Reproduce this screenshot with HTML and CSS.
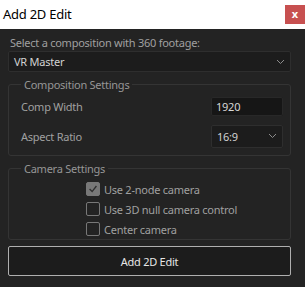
FILE: index.html
```html
<!DOCTYPE html>
<html>
  <head>
    <meta charset="UTF-8">
    <title>Add 2D Edit</title>
    <link rel="stylesheet" href="styles.css">
  </head>
  <body>
    <div class="titlebar">
      <span class="title">Add 2D Edit</span>
      <button type="button" class="close">x</button>
    </div>
    <div class="panel">
      <label class="intro">Select a composition with 360 footage:</label>
      <div class="dropdown wide">
        <span>VR Master</span>
        <svg width="9" height="6" viewBox="0 0 9 6"><path d="M1 1 L4.5 4.5 L8 1" fill="none" stroke="#8c8c8c" stroke-width="1"/></svg>
      </div>
      <fieldset>
        <legend>Composition Settings</legend>
        <div class="row">
          <label>Comp Width</label>
          <input type="text" value="1920">
        </div>
        <div class="row">
          <label>Aspect Ratio</label>
          <div class="dropdown small">
            <span>16:9</span>
            <svg width="9" height="6" viewBox="0 0 9 6"><path d="M1 1 L4.5 4.5 L8 1" fill="none" stroke="#8c8c8c" stroke-width="1"/></svg>
          </div>
        </div>
      </fieldset>
      <fieldset class="camera">
        <legend>Camera Settings</legend>
        <div class="checks">
          <label class="check"><input type="checkbox" checked> Use 2-node camera</label>
          <label class="check"><input type="checkbox"> Use 3D null camera control</label>
          <label class="check"><input type="checkbox"> Center camera</label>
        </div>
      </fieldset>
      <button type="button" class="action">Add 2D Edit</button>
    </div>
  </body>
</html>
```

FILE: styles.css
```css
* {
  box-sizing: border-box;
}
html, body {
  margin: 0;
  height: 100%;
}
body {
  font-family: "Noto Sans", sans-serif;
  font-size: 11px;
  letter-spacing: -0.25px;
  background-color: rgb(35, 35, 35);
  color: rgb(160, 160, 160);
}
.titlebar {
  height: 29px;
  background-color: white;
  display: flex;
  align-items: flex-start;
  justify-content: space-between;
}
.title {
  color: black;
  font-size: 13px;
  padding: 5px 0 0 3px;
}
.close {
  margin-top: 5px;
  width: 20px;
  height: 19px;
  border: none;
  background-color: rgb(199, 80, 80);
  color: white;
  font-family: "Noto Sans", sans-serif;
  font-size: 11px;
  font-weight: bold;
  padding: 0 0 2px 0;
}
.panel {
  padding: 6px 14px 0 8px;
}
.intro {
  display: block;
  padding-left: 2px;
  line-height: 16px;
}
.dropdown {
  display: flex;
  align-items: center;
  justify-content: space-between;
  background-color: rgb(28, 28, 28);
  border: 1px solid rgb(46, 46, 46);
  border-radius: 2px;
  color: rgb(210, 210, 210);
}
.dropdown.wide {
  height: 21px;
  padding: 0 5px 0 5px;
}
.dropdown.small {
  width: 72px;
  height: 23px;
  padding: 0 5px 0 5px;
}
fieldset {
  margin: 6px 0 0 0;
  padding: 0 7px 4px 12px;
  border: 1px solid rgb(52, 52, 52);
  border-radius: 3px;
}
legend {
  padding: 0 3px;
  margin-left: 0;
  line-height: 13px;
  color: rgb(150, 150, 150);
}
.row {
  display: flex;
  align-items: center;
  justify-content: space-between;
  height: 30px;
}
.row input {
  width: 72px;
  height: 19px;
  background-color: rgb(22, 22, 22);
  border: 1px solid rgb(40, 40, 40);
  border-radius: 2px;
  color: rgb(215, 215, 215);
  font-family: "Noto Sans", sans-serif;
  font-size: 11px;
  letter-spacing: -0.25px;
  padding: 0 4px;
}
.camera {
  margin-top: 6px;
  padding: 4px 7px 0 12px;
}
.checks {
  padding-left: 65px;
}
.check {
  display: flex;
  align-items: center;
  height: 20px;
  gap: 4px;
}
.check input {
  appearance: none;
  margin: 0;
  width: 14px;
  height: 14px;
  border: 1px solid rgb(120, 120, 120);
  border-radius: 2px;
}
.check input:checked {
  background-color: rgb(120, 120, 120);
  border-color: rgb(120, 120, 120);
  background-image: url("data:image/svg+xml,%3Csvg xmlns='http://www.w3.org/2000/svg' viewBox='0 0 14 14'%3E%3Cpath d='M3 7 L6 10 L11 3.5' fill='none' stroke='%23303030' stroke-width='1.6'/%3E%3C/svg%3E");
}
.action {
  display: block;
  width: 100%;
  height: 30px;
  margin-top: 6px;
  background-color: rgb(28, 28, 28);
  border: 1px solid rgb(175, 175, 175);
  border-radius: 2px;
  color: rgb(230, 230, 230);
  font-family: "Noto Sans", sans-serif;
  font-size: 11px;
  letter-spacing: -0.25px;
}
```
